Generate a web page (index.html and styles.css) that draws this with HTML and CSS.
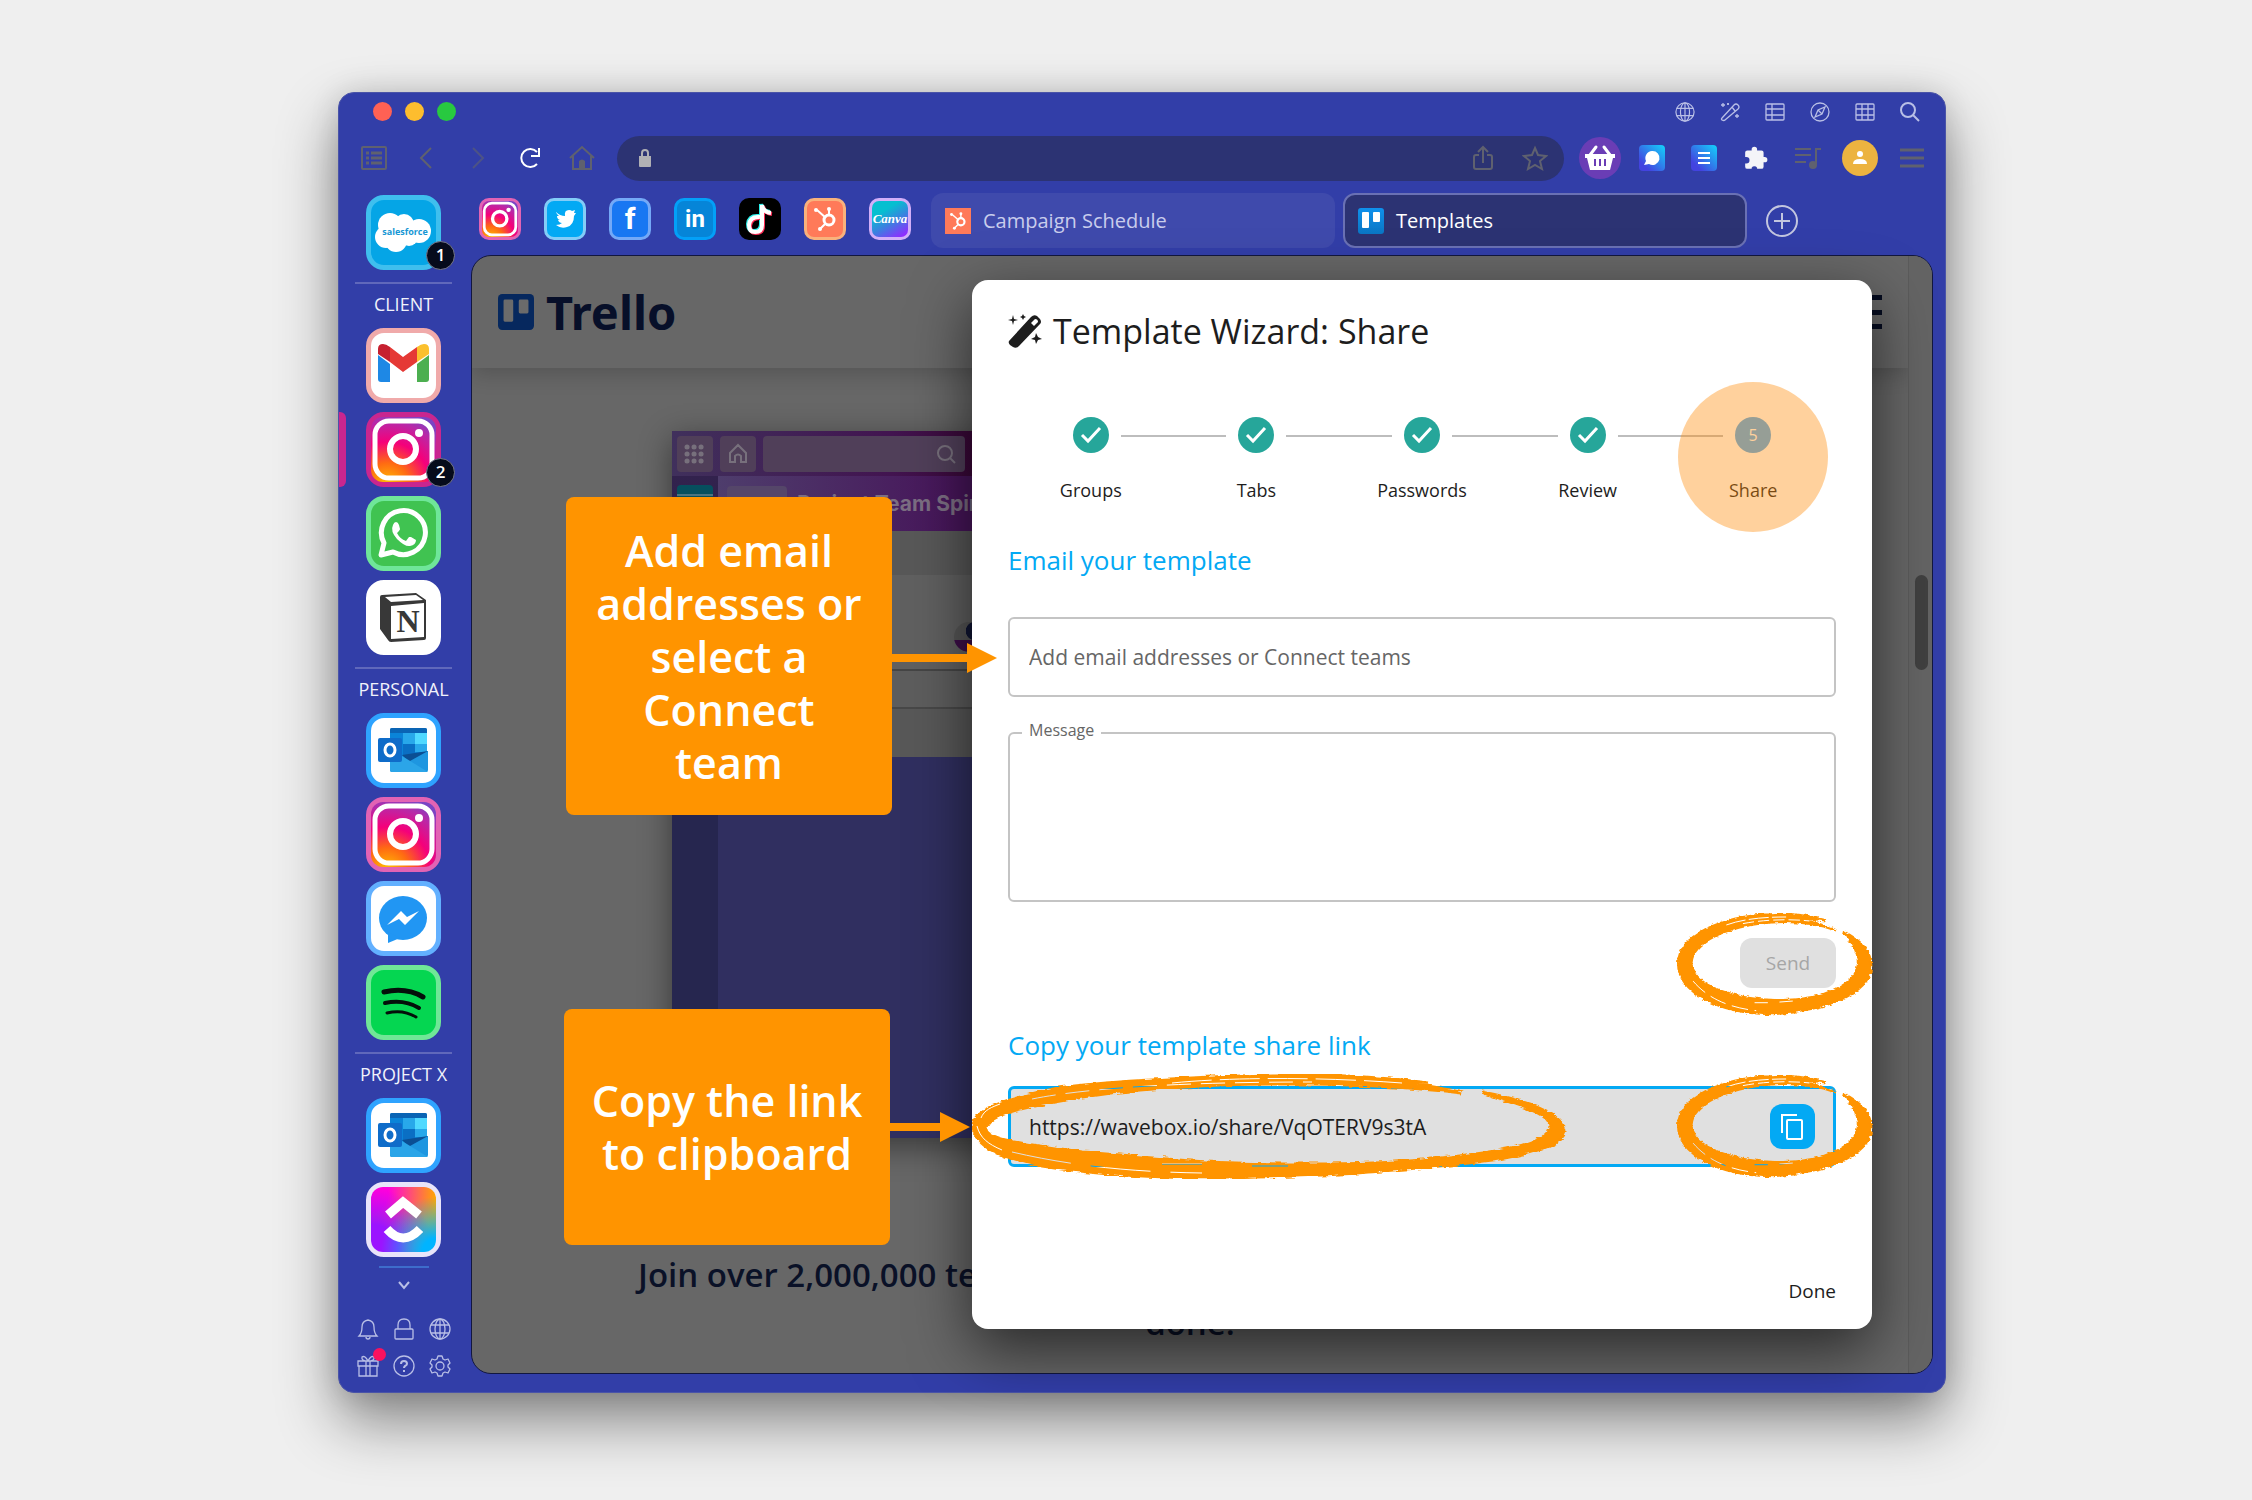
FILE: index.html
```html
<!DOCTYPE html>
<html lang="en">
<head>
    <meta charset="UTF-8">
    <meta name="viewport" content="width=device-width, initial-scale=1.0">
    <title>Template Wizard: Share</title>
    <link rel="stylesheet" href="styles.css">
</head>
<body>
    <!-- shared icon shapes -->
    <svg class="defs" aria-hidden="true">
        <defs>
            <radialGradient id="insta-fill" cx="0.25" cy="1.05" r="1.15">
                <stop offset="0" stop-color="#ffc400"/>
                <stop offset="0.3" stop-color="#ff6a13"/>
                <stop offset="0.58" stop-color="#f5007a"/>
                <stop offset="0.85" stop-color="#b829a8"/>
                <stop offset="1" stop-color="#7a45c4"/>
            </radialGradient>
            <linearGradient id="app-fill" x1="0" y1="1" x2="1" y2="0">
                <stop offset="0.2" stop-color="#4343e0"/>
                <stop offset="1" stop-color="#12d4fb"/>
            </linearGradient>
            <linearGradient id="canva-fill" x1="0.2" y1="0" x2="0.8" y2="1">
                <stop offset="0.25" stop-color="#06bfd0"/>
                <stop offset="0.6" stop-color="#3c7fe0"/>
                <stop offset="1" stop-color="#8f2cff"/>
            </linearGradient>
            <linearGradient id="trello-fill" x1="0" y1="0" x2="0" y2="1">
                <stop offset="0" stop-color="#0f91ec"/>
                <stop offset="1" stop-color="#0a76c4"/>
            </linearGradient>
            <symbol id="instagram" viewBox="0 0 65 65">
                <rect width="65" height="65" fill="url(#insta-fill)"/>
                <rect x="4" y="4" width="57" height="57" rx="14" fill="none" stroke="#fff" stroke-width="5"/>
                <circle cx="32" cy="32" r="13" fill="none" stroke="#fff" stroke-width="6"/>
                <circle cx="48" cy="16" r="4" fill="#fff"/>
            </symbol>
            <symbol id="outlook" viewBox="0 0 65 65">
                <rect x="19" y="10" width="37" height="44" rx="2" fill="#0a84d8"/>
                <path d="M19 15v-3q0-2 2-2h33q2 0 2 2v3z" fill="#0a64b4"/>
                <path d="M44 15h12v11H44z" fill="#50d9ff"/>
                <path d="M32 15h12v11H32zM44 26h12v8H44z" fill="#28a8ea"/>
                <path d="M32 26h12v12H32z" fill="#0a6fc4"/>
                <path d="M31 37l26-4v2L39 45z" fill="#0b4f94"/>
                <path d="M57 33v19q0 2-2 2H21l18-11z" fill="#1e96e0"/>
                <path d="M31 38l26 16H21q-2 0-2-2V40z" fill="#2ba5e8"/>
                <rect x="7" y="20" width="24" height="24" rx="2" fill="#0f6cc9"/>
                <ellipse cx="19" cy="32" rx="5" ry="6" fill="none" stroke="#fff" stroke-width="3"/>
            </symbol>
            <symbol id="hubspot" viewBox="0 0 36 36">
                <g fill="none" stroke="#fff" stroke-width="2">
                    <path d="M10 9l9 8M22 14V8M18 23l-5 5"/>
                    <circle cx="22" cy="19" r="5" stroke-width="3"/>
                </g>
                <g fill="#fff"><circle cx="9" cy="9" r="2"/><circle cx="22" cy="8" r="2"/><circle cx="13" cy="28" r="2"/></g>
            </symbol>
            <symbol id="trello" viewBox="0 0 26 26">
                <rect width="26" height="26" rx="3"/>
                <path class="trello-cols" d="M5 4h5q1 0 1 1v14q0 1-1 1H5q-1 0-1-1V5q0-1 1-1zM16 4h5q1 0 1 1v8q0 1-1 1h-5q-1 0-1-1V5q0-1 1-1z"/>
            </symbol>
            <symbol id="globe" viewBox="0 0 22 22">
                <circle cx="11" cy="11" r="10"/><ellipse cx="11" cy="11" rx="5" ry="10"/><path d="M2 7h18M2 15h18M11 1v20"/>
            </symbol>
            <!-- brush stroke rings, open at the top right -->
            <filter id="rough" x="-5%" y="-10%" width="110%" height="120%">
                <feTurbulence type="fractalNoise" baseFrequency="0.06 0.12" numOctaves="3" seed="4" result="noise"/>
                <feDisplacementMap in="SourceGraphic" in2="noise" scale="12" xChannelSelector="R" yChannelSelector="G"/>
            </filter>
            <filter id="rough-wide" x="-5%" y="-10%" width="110%" height="120%">
                <feTurbulence type="fractalNoise" baseFrequency="0.08 0.4" numOctaves="3" seed="7" result="noise"/>
                <feDisplacementMap in="SourceGraphic" in2="noise" scale="5" xChannelSelector="R" yChannelSelector="G"/>
            </filter>
            <mask id="streaks" maskUnits="userSpaceOnUse" x="-20" y="-20" width="630" height="350">
                <rect x="-20" y="-20" width="630" height="350" fill="#fff"/>
                <g fill="none" stroke="#000" stroke-width="3">
                    <path stroke-dasharray="60 10" d="M150 36C200 18 260 12 330 12"/>
                    <path stroke-dasharray="34 12" d="M200 32C250 22 330 16 400 24"/>
                    <path stroke-dasharray="50 20" d="M50 205C100 264 170 286 240 294"/>
                    <path d="M235 270h40M310 268l40-3"/>
                </g>
            </mask>
            <mask id="streaks-wide" maskUnits="userSpaceOnUse" x="-10" y="-10" width="620" height="130">
                <rect x="-10" y="-10" width="620" height="130" fill="#fff"/>
                <g fill="none" stroke="#000">
                    <path stroke-dasharray="40 8" d="M200 9C260 3 350 3 430 9"/>
                    <path stroke-dasharray="24 10" d="M60 25C120 13 220 8 340 8"/>
                    <path stroke-dasharray="60 20" d="M40 78C100 92 160 98 230 99"/>
                    <path d="M190 90h40M280 92h36"/>
                    <path d="M5 52C8 64 16 70 30 76M9 44C12 36 20 33 28 30"/>
                </g>
            </mask>
            <symbol id="ring" viewBox="0 0 590 310">
                <g mask="url(#streaks)">
                    <g filter="url(#rough)" fill="#ff9400" stroke="#ff9400" stroke-width="7">
                        <path d="M450 22C390 4 330 0 280 4 130 10 8 70 5 150c-2 90 130 153 269 153C430 299 582 250 586 160c0-45-34-80-84-104 28 34 46 60 44 96C544 215 440 264 310 262 180 264 46 220 45 150 48 90 140 40 290 28c60-4 130 4 190 24-40-20-80-28-120-32 40-4 64-2 90 2z"/>
                        <path stroke="none" d="M60 220C110 280 190 306 290 308l70-6-200-26z"/>
                    </g>
                </g>
            </symbol>
            <symbol id="ring-long" viewBox="0 0 595 105">
                <g mask="url(#streaks-wide)">
                    <path filter="url(#rough-wide)" fill="#ff9400" stroke="#ff9400" stroke-width="3" d="M457 9C400 2 350 0 300 1 200 4 130 8 86 14 40 24 2 34 1 52c2 22 30 32 69 40 50 8 110 12 183 12 60-2 100-2 143-6 70-6 190-12 197-40 0-18-40-32-83-40 30 12 68 20 68 34 0 18-50 26-100 31-40 5-80 7-123 7-50 0-80 0-122-2-60-4-90-8-123-10-50-7-96-12-96-23 0-16 50-24 96-32C160 15 190 14 212 13c50-4 180-6 278 6-30-8-60-10-90-12 20-2 40 0 57 2z"/>
                </g>
            </symbol>
        </defs>
    </svg>

    <div class="window">
        <header class="titlebar">
            <div class="lights"><span class="light red"></span><span class="light yellow"></span><span class="light green"></span></div>
            <div class="tools">
                <button aria-label="Languages"><svg class="line" width="20" height="20"><use href="#globe"/></svg></button>
                <button aria-label="Wizard"><svg class="line" viewBox="0 0 20 20"><path d="M2 16L14 3q2-2 4 0t0 4L5 18q-1 1-3 0-1-1 0-2zM12 5l3 4M3 1v4M1 3h4M8 1v2M7 2h2M17 12v4M15 14h4"/></svg></button>
                <button aria-label="List"><svg class="line" viewBox="0 0 20 20"><rect x="1" y="2" width="18" height="16" rx="1"/><path d="M1 7h18M1 13h18M7 2v16"/></svg></button>
                <button aria-label="Explore"><svg class="line" viewBox="0 0 20 20"><circle cx="10" cy="10" r="9"/><path d="M15 5l-3 7-7 3 3-7zM8 8l4 4"/></svg></button>
                <button aria-label="Grid"><svg class="line" viewBox="0 0 20 20"><rect x="1" y="2" width="18" height="16" rx="1"/><path d="M1 7h18M1 13h18M7 2v16M13 2v16"/></svg></button>
                <button aria-label="Search"><svg class="line thick" viewBox="0 0 20 20"><circle cx="8" cy="8" r="7"/><path d="M13 13l6 6"/></svg></button>
            </div>
        </header>

        <div class="toolbar">
            <nav class="nav-buttons">
                <button aria-label="Sidebar"><svg class="dim" viewBox="0 0 26 26"><rect x="1" y="2" width="24" height="22" rx="1"/><path d="M10 8h11M10 13h11M10 18h11M5 8h3M5 13h3M5 18h3" stroke-width="3"/></svg></button>
                <button aria-label="Back"><svg class="dim" viewBox="0 0 26 26"><path d="M18 3L8 13l10 10"/></svg></button>
                <button aria-label="Forward"><svg class="dim faint" viewBox="0 0 26 26"><path d="M8 3l10 10L8 23"/></svg></button>
                <button aria-label="Reload"><svg class="bright" viewBox="0 0 26 26"><path d="M20 19a9 9 0 1 1 0-12M22 3v8h-8"/></svg></button>
                <button aria-label="Home"><svg class="dim" viewBox="0 0 26 26"><path d="M1 13L13 2l12 11M4 11v13h18V11"/><path d="M10 24v-8q3-3 6 0v8z" fill="#5f616f" stroke="none"/></svg></button>
            </nav>
            <div class="address">
                <svg class="lock" viewBox="0 0 18 20"><path d="M3 8h12v10q0 1-1 1H4q-1 0-1-1z" fill="#b0b0b4"/><path d="M6 8V5q0-3 3-3t3 3v3" fill="none" stroke="#b0b0b4" stroke-width="2"/></svg>
                <input type="text" aria-label="Address">
                <button aria-label="Share page"><svg class="dim" viewBox="0 0 26 26"><path d="M9 10H6q-2 0-2 2v10q0 2 2 2h14q2 0 2-2V12q0-2-2-2h-3M13 18V3M8 7l5-5 5 5"/></svg></button>
                <button aria-label="Bookmark"><svg class="dim" viewBox="0 0 26 26"><path d="M13 3l3 7 8 1-6 5 2 8-7-4-7 4 2-8-6-5 8-1z"/></svg></button>
            </div>
            <div class="extensions">
                <button aria-label="Shopping"><svg width="42" height="42" viewBox="0 0 42 42"><circle cx="21" cy="21" r="21" fill="#6a3db5"/><path d="M6 17h30v4h-2l-3 12H11L8 21H6z" fill="#fff"/><path d="M11 18l6-8M31 18l-6-8" stroke="#fff" stroke-width="3" stroke-linecap="round"/><path d="M16 22v7M21 22v7M26 22v7" stroke="#6a3db5" stroke-width="2"/></svg></button>
                <button aria-label="Chat"><svg width="26" height="26" viewBox="0 0 26 26"><rect width="26" height="26" rx="4" fill="url(#app-fill)"/><path d="M13 6a7 7 0 1 1-3 13l-5 1 2-4a7 7 0 0 1 6-10z" fill="#fff"/></svg></button>
                <button aria-label="Notes"><svg width="26" height="26" viewBox="0 0 26 26"><rect width="26" height="26" rx="4" fill="url(#app-fill)"/><path d="M7 8h12M7 13h12M7 18h12" stroke="#fff" stroke-width="2"/></svg></button>
                <button aria-label="Extensions"><svg width="26" height="26" viewBox="0 0 24 24"><path d="M20 11h-1V7a2 2 0 0 0-2-2h-4V4a2 2 0 0 0-5 0v1H4a2 2 0 0 0-2 2v4h1a3 3 0 0 1 0 6H2v3a2 2 0 0 0 2 2h4v-1a3 3 0 0 1 5 0v1h4a2 2 0 0 0 2-2v-4h1a2 2 0 0 0 0-5z" fill="#f4f4f8"/></svg></button>
                <button aria-label="Playlist"><svg class="dim" width="26" height="26" viewBox="0 0 26 26"><path d="M0 4h16M0 10h16M0 17h11M26 4h-5v15"/><circle cx="18" cy="20" r="4" fill="#5f616f" stroke="none"/></svg></button>
                <button aria-label="Account"><svg width="36" height="36" viewBox="0 0 36 36"><circle cx="18" cy="18" r="18" fill="#ecb340"/><circle cx="18" cy="14" r="3" fill="#fff"/><path d="M11 24q0-5 7-5t7 5z" fill="#fff"/></svg></button>
                <button aria-label="Menu"><svg class="dim" width="24" height="26" viewBox="0 0 24 26"><path d="M0 5h24M0 13h24M0 21h24" stroke-width="3"/></svg></button>
            </div>
        </div>

        <div class="workspace">
            <aside class="sidebar">
                <a href="#" class="tile salesforce" aria-label="Salesforce">
                    <svg viewBox="0 0 65 65"><g fill="#fff"><circle cx="19" cy="25" r="12"/><circle cx="33" cy="24" r="10"/><circle cx="48" cy="31" r="12"/><circle cx="15" cy="37" r="11"/><circle cx="25" cy="41" r="11"/><circle cx="38" cy="37" r="9"/></g><text x="34" y="35" class="sf-text">salesforce</text></svg>
                    <span class="badge">1</span>
                </a>
                <section class="group">
                    <h2>CLIENT</h2>
                    <a href="#" class="tile gmail" aria-label="Gmail">
                        <svg viewBox="0 0 65 65"><path d="M7 22l12 9v18h-9q-3 0-3-3z" fill="#1e88e5"/><path d="M58 22l-12 9v18h9q3 0 3-3z" fill="#4caf50"/><path d="M19 14l13 10 14-10v15L32 39 19 29z" fill="#e53935"/><path d="M7 22v-6q0-5 5-5 3 0 7 3v15L7 21z" fill="#c62030"/><path d="M58 22v-6q0-5-5-5-3 0-7 3v15l12-8z" fill="#fbc02d"/></svg>
                    </a>
                    <a href="#" class="tile insta active" aria-label="Instagram, client"><svg><use href="#instagram"/></svg><span class="badge">2</span></a>
                    <a href="#" class="tile whatsapp" aria-label="WhatsApp">
                        <svg viewBox="0 0 65 65"><path d="M10 54l3-12a22 22 0 1 1 9 9z" fill="none" stroke="#fff" stroke-width="5" stroke-linejoin="round"/><path d="M25 21q2 0 3 3l1 4q0 1-3 4 3 6 9 8l3-4 2 0 5 3q0 5-6 6-5 1-13-7-7-8-4-14 1-3 3-3z" fill="#fff"/></svg>
                    </a>
                    <a href="#" class="tile notion" aria-label="Notion">
                        <svg viewBox="0 0 65 65"><path d="M9 12q0-2 2-2l34-2 10 7v38q0 2-2 2l-33 2q-2 0-3-2l-8-11z" fill="#383838"/><path d="M14 12l31-2 7 5-32 2z" fill="#fff"/><path d="M20 21l33-3v34l-33 2z" fill="#fff"/><text x="37" y="47" class="notion-n">N</text></svg>
                    </a>
                </section>
                <section class="group">
                    <h2>PERSONAL</h2>
                    <a href="#" class="tile outlook" aria-label="Outlook"><svg><use href="#outlook"/></svg></a>
                    <a href="#" class="tile insta" aria-label="Instagram, personal"><svg><use href="#instagram"/></svg></a>
                    <a href="#" class="tile messenger" aria-label="Messenger">
                        <svg viewBox="0 0 65 65"><ellipse cx="32" cy="32" rx="24" ry="22" fill="#2196f3"/><path d="M17 46v11l12-5z" fill="#2196f3"/><path d="M16 39l14-14 6 6 12-6-14 14-6-6z" fill="#fff"/></svg>
                    </a>
                    <a href="#" class="tile spotify" aria-label="Spotify">
                        <svg viewBox="0 0 65 65"><g fill="none" stroke="#04100a" stroke-linecap="round"><path d="M13 22q22-5 39 5" stroke-width="5"/><path d="M14 33q19-4 34 5" stroke-width="4"/><path d="M16 43q16-4 29 4" stroke-width="3"/></g></svg>
                    </a>
                </section>
                <section class="group">
                    <h2>PROJECT X</h2>
                    <a href="#" class="tile outlook" aria-label="Outlook, project"><svg><use href="#outlook"/></svg></a>
                    <a href="#" class="tile clickup" aria-label="ClickUp">
                        <svg viewBox="0 0 65 65"><g fill="none" stroke="#fff" stroke-width="9"><path d="M17 28l15-13 16 13"/><path d="M16 42q16 18 33 0"/></g></svg>
                    </a>
                </section>
                <button class="more" aria-label="More groups"><svg class="line thick" viewBox="0 0 20 20"><path d="M5 7l5 6 5-6"/></svg></button>
                <div class="side-tools">
                    <button aria-label="Notifications"><svg class="line" viewBox="0 0 22 22"><path d="M2 18q3-3 3-9 0-6 6-7 6 1 6 7 0 6 3 9zM9 19q0 2 2 2t2-2"/></svg></button>
                    <button aria-label="Lock"><svg class="line" viewBox="0 0 22 22"><rect x="2" y="11" width="18" height="10" rx="1"/><path d="M5 11V7q0-6 6-6t6 6v4"/></svg></button>
                    <button aria-label="Network"><svg class="line"><use href="#globe"/></svg></button>
                    <button class="gift" aria-label="What's new"><svg class="line" viewBox="0 0 22 22"><path d="M1 6h20v5H1zM2 11h18v10H2zM9 6v15M13 6v15M11 6Q4 6 5 2q3-2 6 4 3-6 6-4 1 4-6 4"/></svg></button>
                    <button aria-label="Help"><svg class="line" viewBox="0 0 22 22"><circle cx="11" cy="11" r="10"/><path d="M8 9q0-3 3-3t3 3q0 1-2 2-1 1-1 2M11 15v2" stroke-width="2"/></svg></button>
                    <button aria-label="Settings"><svg class="line" viewBox="0 0 22 22"><circle cx="11" cy="11" r="4"/><path d="M9 1h4l1 3 2 1 3-1 2 4-2 2v2l2 2-2 4-3-1-2 1-1 3H9l-1-3-2-1-3 1-2-4 2-2v-2L1 8l2-4 3 1 2-1z" stroke-linejoin="round"/></svg></button>
                </div>
            </aside>

            <div class="main">
                <nav class="tabs">
                    <div class="pinned">
                        <a href="#" class="pin insta" aria-label="Instagram tab"><svg><use href="#instagram"/></svg></a>
                        <a href="#" class="pin twitter" aria-label="Twitter"><svg viewBox="0 0 36 36"><path d="M9 11q4 4 9 4-1-6 4-6 2 0 3 1l3-1-1 3 2 0-2 3q0 9-7 11-6 2-11-2 4 0 6-2-3 0-4-3h2q-3-1-3-4l2 0q-3-3-3-4z" fill="#fff"/></svg></a>
                        <a href="#" class="pin facebook" aria-label="Facebook"><svg viewBox="0 0 36 36"><text x="18" y="28">f</text></svg></a>
                        <a href="#" class="pin linkedin" aria-label="LinkedIn"><svg viewBox="0 0 36 36"><text x="18" y="26">in</text></svg></a>
                        <a href="#" class="pin tiktok" aria-label="TikTok"><svg viewBox="0 0 36 36"><g fill="none" stroke-width="4"><path d="M17 15q-10-1-11 8 0 7 6 7 7 0 7-7V3q1 7 9 8" stroke="#2af0ea"/><path d="M19 17q-10-1-11 8 0 7 6 7 7 0 7-7V5q1 7 9 8" stroke="#fe2c55"/><path d="M18 16q-10-1-11 8 0 7 6 7 7 0 7-7V4q1 7 9 8" stroke="#fff"/></g></svg></a>
                        <a href="#" class="pin hub" aria-label="HubSpot"><svg><use href="#hubspot"/></svg></a>
                        <a href="#" class="pin canva" aria-label="Canva"><svg viewBox="0 0 36 36"><rect width="36" height="36" fill="url(#canva-fill)"/><text x="18" y="22">Canva</text></svg></a>
                    </div>
                    <a href="#" class="tab"><svg class="favicon hub-fav"><use href="#hubspot"/></svg>Campaign Schedule</a>
                    <a href="#" class="tab current"><svg class="favicon trello-fav"><use href="#trello"/></svg>Templates</a>
                    <button class="add-tab" aria-label="New tab"><svg viewBox="0 0 32 32"><circle cx="16" cy="16" r="15"/><path d="M16 8v16M8 16h16"/></svg></button>
                </nav>

                <div class="viewport">
                    <div class="page">
                        <div class="site">
                            <header class="site-header">
                                <svg class="site-logo"><use href="#trello"/></svg>
                                <span class="site-name">Trello</span>
                                <span class="burger"></span>
                            </header>
                            <div class="board">
                                <div class="board-bar">
                                    <span class="board-btn"><svg viewBox="0 0 26 26"><path d="M5 6h.1M12 6h.1M19 6h.1M5 13h.1M12 13h.1M19 13h.1M5 20h.1M12 20h.1M19 20h.1" stroke-width="5" stroke-linecap="round"/></svg></span>
                                    <span class="board-btn"><svg viewBox="0 0 26 26"><path d="M5 21V12l8-8 8 8v9h-5v-6q-3-3-6 0v6z"/></svg></span>
                                    <span class="board-search"><svg viewBox="0 0 26 26"><circle cx="12" cy="12" r="7"/><path d="M17 17l5 5"/></svg></span>
                                </div>
                                <div class="board-body">
                                    <div class="board-side"><span class="board-chip"></span></div>
                                    <div class="board-main">
                                        <div class="board-title"><span class="board-tag"></span>Project Team Spirit</div>
                                        <div class="board-filter"></div>
                                        <div class="board-card"><span class="avatar"></span></div>
                                        <div class="board-row"></div>
                                        <div class="board-foot"></div>
                                    </div>
                                </div>
                            </div>
                            <p class="tagline">Join over 2,000,000 teams worldwide that are using Trello to get more done.</p>
                        </div>
                        <div class="scroll"><span class="thumb"></span></div>
                    </div>

                    <form class="modal" onsubmit="return false">
                        <h1><svg viewBox="0 0 34 34"><path d="M1 27L23 3q3-3 6-1l3 3q2 3 0 5L11 32q-3 3-6 1l-3-2q-2-2-1-4z"/><path d="M23 9l4-4q3 0 3 3l-4 4z" fill="#fff"/><path d="M5 1l1 4 4 1-4 1-1 4-1-4-4-1 4-1zM15 0l1 2 2 1-2 1-1 2-1-2-2-1 2-1zM28 19l2 4 4 2-4 1-2 4-1-4-4-1 4-2z"/></svg>Template Wizard: Share</h1>
                        <ol class="steps">
                            <li><span class="dot"><svg viewBox="0 0 36 36"><path d="M9 18l6 6 12-13"/></svg></span>Groups</li>
                            <li><span class="dot"><svg viewBox="0 0 36 36"><path d="M9 18l6 6 12-13"/></svg></span>Tabs</li>
                            <li><span class="dot"><svg viewBox="0 0 36 36"><path d="M9 18l6 6 12-13"/></svg></span>Passwords</li>
                            <li><span class="dot"><svg viewBox="0 0 36 36"><path d="M9 18l6 6 12-13"/></svg></span>Review</li>
                            <li class="now"><span class="dot">5</span>Share<span class="spot"></span></li>
                        </ol>
                        <h3>Email your template</h3>
                        <div class="field emails">
                            <input type="text" aria-label="Email addresses" placeholder="Add email addresses or Connect teams">
                            <div class="callout callout-add">Add email addresses or select a Connect team</div>
                        </div>
                        <div class="field message">
                            <label for="message">Message</label>
                            <textarea id="message"></textarea>
                        </div>
                        <div class="send-row">
                            <button class="send" disabled>Send</button>
                            <svg class="ring ring-small"><use href="#ring"/></svg>
                        </div>
                        <h3>Copy your template share link</h3>
                        <div class="field link">
                            <input type="text" aria-label="Share link" value="https://wavebox.io/share/VqOTERV9s3tA" readonly>
                            <button class="copy" aria-label="Copy link"><svg viewBox="0 0 45 45"><path d="M12 29V11h15"/><rect x="17" y="16" width="15" height="19" rx="1"/></svg></button>
                            <svg class="ring ring-wide"><use href="#ring-long"/></svg>
                            <svg class="ring ring-small"><use href="#ring"/></svg>
                            <div class="callout callout-copy">Copy the link to clipboard</div>
                        </div>
                        <button class="done">Done</button>
                    </form>
                </div>
            </div>
        </div>
    </div>
</body>
</html>
```
FILE: styles.css
```css
* {
    box-sizing: border-box;
}
body {
    display: flex;
    min-height: 100vh;
    margin: 0;
    padding: 92px 306px 107px 338px;
    background: #efefef;
    font-family: "Open Sans", "Noto Sans", sans-serif;
    color: #1d1d1d;
}
button, input, textarea {
    font-family: inherit;
    color: inherit;
}
button {
    display: flex;
    align-items: center;
    justify-content: center;
    padding: 0;
    border: none;
    background: none;
    cursor: pointer;
}
a {
    color: inherit;
    text-decoration: none;
}
svg {
    display: block;
}
.defs {
    position: absolute;
    width: 0;
    height: 0;
}

/* window */
.window {
    flex: 1;
    display: flex;
    flex-direction: column;
    border-radius: 16px;
    background: #323ea8;
    border: 1px solid #4a54a8;
    box-shadow: 0 28px 60px rgba(0, 0, 0, 0.45), 0 0 30px rgba(0, 0, 0, 0.12);
}
.titlebar {
    display: flex;
    align-items: center;
    justify-content: space-between;
    height: 37px;
    padding: 0 25px 0 34px;
}
.lights {
    display: flex;
    gap: 13px;
}
.light {
    width: 19px;
    height: 19px;
    border-radius: 50%;
}
.red { background: #ff6154; }
.yellow { background: #fdbd2e; }
.green { background: #28c940; }
.tools {
    display: flex;
    gap: 25px;
}
.tools svg {
    width: 20px;
    height: 20px;
}
.line {
    fill: none;
    stroke: #b9bfe6;
    stroke-width: 1.3;
}
.thick {
    stroke-width: 2;
}
.dim {
    fill: none;
    stroke: #5f616f;
    stroke-width: 2;
}
.faint {
    opacity: 0.6;
}
.bright {
    fill: none;
    stroke: #fff;
    stroke-width: 2;
}

/* toolbar */
.toolbar {
    display: flex;
    align-items: center;
    height: 56px;
    padding: 0 12px 0 22px;
}
.nav-buttons {
    display: flex;
    gap: 26px;
    margin-right: 22px;
}
.nav-buttons svg, .address button svg {
    width: 26px;
    height: 26px;
}
.address {
    flex: 1;
    display: flex;
    align-items: center;
    gap: 26px;
    height: 45px;
    margin-right: 15px;
    padding: 0 16px 0 19px;
    border-radius: 23px;
    background: #2c3373;
}
.address input {
    flex: 1;
    border: none;
    background: none;
    font-size: 20px;
    color: #fff;
}
.lock {
    width: 18px;
    height: 20px;
}
.extensions {
    display: flex;
    gap: 10px;
}
.extensions button {
    width: 42px;
    height: 42px;
}

/* sidebar */
.workspace {
    flex: 1;
    display: flex;
}
.sidebar {
    display: flex;
    flex-direction: column;
    align-items: center;
    width: 132px;
    padding: 9px 3px 15px 0;
}
.tile {
    position: relative;
    display: block;
    width: 75px;
    height: 75px;
    border: 5px solid #fff;
    border-radius: 18px;
    background: #fff;
}
.tile svg {
    width: 65px;
    height: 65px;
    border-radius: 12px;
}
.tile + .tile {
    margin-top: 9px;
}
.badge {
    position: absolute;
    top: 41px;
    right: -19px;
    width: 29px;
    height: 29px;
    border: 1px solid #77798c;
    border-radius: 50%;
    background: #060b1c;
    color: #fff;
    font-size: 17px;
    font-weight: 600;
    line-height: 26px;
    text-align: center;
}
.salesforce { background: #05a5e6; border-color: #3fbfee; }
.gmail { border-color: #f0aaaa; }
.insta { background: #e263b4; border-color: #e263b4; }
.active { background: #c9268f; border-color: #c9268f; }
.whatsapp { background: #40c351; border-color: #6fe699; }
.outlook { border-color: #2ea3ff; }
.messenger { border-color: #62b0ff; }
.spotify { background: #05d651; border-color: #70e797; }
.clickup { border-color: #e8e4fa; }
.clickup svg {
    background: radial-gradient(circle at 100% 100%, #00b4ff 15%, transparent 60%), radial-gradient(circle at 0 100%, #9b14ff 30%, transparent 70%), radial-gradient(circle at 0 10%, #ff00dc 20%, transparent 75%), #ffa800;
}
.active::before {
    content: "";
    position: absolute;
    left: -32px;
    top: -5px;
    width: 7px;
    height: 75px;
    border-radius: 0 6px 6px 0;
    background: #c9268f;
}
.sf-text {
    font-size: 9px;
    font-weight: 700;
    text-anchor: middle;
    fill: #1797d4;
}
.notion-n {
    font-family: "Liberation Serif", serif;
    font-size: 32px;
    font-weight: 700;
    text-anchor: middle;
    fill: #383838;
}
.group {
    display: flex;
    flex-direction: column;
    align-items: center;
    width: 97px;
    margin-top: 12px;
    border-top: 2px solid #6068bb;
}
.group h2 {
    margin: 0;
    height: 44px;
    color: #f1f2fb;
    font-size: 18px;
    font-weight: 400;
    line-height: 40px;
    white-space: nowrap;
}
.more {
    width: 50px;
    height: 35px;
    margin-top: 9px;
    border-top: 2px solid #3d6ccb;
}
.more svg {
    width: 20px;
    height: 20px;
}
.side-tools {
    display: grid;
    grid-template-columns: repeat(3, 22px);
    gap: 15px 14px;
    margin-top: auto;
}
.side-tools svg {
    width: 22px;
    height: 22px;
}
.gift {
    position: relative;
}
.gift::after {
    content: "";
    position: absolute;
    top: -7px;
    right: -7px;
    width: 13px;
    height: 13px;
    border-radius: 50%;
    background: #f8125f;
}

/* tabs */
.main {
    flex: 1;
    display: flex;
    flex-direction: column;
    min-width: 0;
    padding: 0 12px 18px 0;
}
.tabs {
    display: flex;
    align-items: center;
    gap: 8px;
    height: 69px;
    padding-left: 8px;
}
.pinned {
    display: flex;
    gap: 23px;
    margin-right: 12px;
    padding-bottom: 4px;
}
.pin {
    width: 42px;
    height: 42px;
    border: 3px solid;
    border-radius: 10px;
}
.pin svg {
    width: 36px;
    height: 36px;
    border-radius: 7px;
}
.pin text {
    fill: #fff;
    text-anchor: middle;
    font-family: Roboto, sans-serif;
    font-size: 24px;
    font-weight: 700;
}
.pin.insta { border-color: #e263b4; }
.twitter { background: #03a9f4; border-color: #83cdf8; }
.facebook { background: #1877f2; border-color: #74a9f7; }
.pin.facebook text { font-size: 30px; }
.linkedin { background: #0685d8; border-color: #03a0f8; }
.tiktok { background: #000; border-color: #000; }
.hub { background: #ff7a59; border-color: #f9b27c; }
.canva { background: #d2aef8; border-color: #d2aef8; }
.pin.canva text {
    font-family: "Liberation Serif", serif;
    font-size: 13px;
    font-style: italic;
}
.tab {
    display: flex;
    flex: 0 1 404px;
    align-items: center;
    gap: 12px;
    height: 55px;
    padding: 0 13px;
    border: 1px solid transparent;
    border-radius: 12px;
    background: #3f4aac;
    color: #c9cdec;
    font-size: 20px;
    white-space: nowrap;
}
.tab.current {
    border: 2px solid #6a71b4;
    background: #2c3373;
    color: #fff;
}
.favicon {
    width: 26px;
    height: 26px;
}
.hub-fav {
    background: #ff7a59;
}
.trello-fav {
    fill: url(#trello-fill);
}
.trello-cols {
    fill: var(--cols, #fff);
}
.add-tab {
    margin-left: 11px;
}
.add-tab svg {
    width: 32px;
    height: 32px;
    fill: none;
    stroke: #c3c6df;
    stroke-width: 2;
}

/* page under the modal */
.viewport {
    position: relative;
    flex: 1;
    display: flex;
}
.page {
    flex: 1;
    display: flex;
    overflow: hidden;
    border: 1px solid #12173f;
    border-radius: 20px;
    background: #676767;
}
.site {
    flex: 1;
    min-width: 0;
}
.site-header {
    display: flex;
    align-items: center;
    height: 112px;
    padding: 0 26px 0 26px;
    box-shadow: 0 6px 20px rgba(0, 0, 0, 0.18);
}
.site-logo {
    --cols: #6b6b6b;
    width: 36px;
    height: 36px;
    fill: #06285e;
}
.site-name {
    margin-left: 12px;
    color: #070f29;
    font-family: "Noto Sans", sans-serif;
    font-size: 47px;
    font-weight: 700;
    line-height: 56px;
}
.burger {
    width: 40px;
    height: 34px;
    margin-left: auto;
    border-top: 5px solid #050c20;
    border-bottom: 5px solid #050c20;
    background: linear-gradient(#050c20, #050c20) center / 100% 5px no-repeat;
}
.board {
    display: flex;
    flex-direction: column;
    height: 707px;
    margin: 63px 200px 0;
    background: #302f60;
    box-shadow: 0 8px 30px rgba(0, 0, 0, 0.45);
}
.board-bar {
    display: flex;
    gap: 7px;
    height: 45px;
    padding: 5px;
    background: linear-gradient(90deg, #40305c, #421450 220px, #3a0838 300px);
}
.board-bar span {
    display: flex;
    align-items: center;
    height: 36px;
    border-radius: 4px;
    background: #503f59;
}
.board-bar svg {
    width: 26px;
    height: 26px;
    fill: none;
    stroke: #77707c;
    stroke-width: 2;
}
.board-btn {
    justify-content: center;
    width: 36px;
}
.board-search {
    justify-content: flex-end;
    width: 202px;
    padding-right: 6px;
}
.board-body {
    flex: 1;
    display: flex;
}
.board-side {
    width: 46px;
    padding: 9px 5px;
    background: linear-gradient(#32224d, #26264f 120px);
}
.board-chip {
    display: block;
    height: 36px;
    border-radius: 4px;
    background: linear-gradient(#064f5e 9px, #4a7480 9px, #4a7480 11px, #064f5e 11px);
}
.board-main {
    flex: 1;
    display: flex;
    flex-direction: column;
}
.board-title {
    display: flex;
    align-items: center;
    gap: 10px;
    height: 55px;
    padding: 0 9px;
    background: linear-gradient(90deg, #4e3d6c, #47155a 240px);
    color: #7b6e82;
    font-family: Inter, sans-serif;
    font-size: 21px;
    font-weight: 700;
    white-space: nowrap;
}
.board-tag {
    width: 60px;
    height: 36px;
    border-radius: 4px;
    background: #554669;
}
.board-filter {
    height: 44px;
    background: #585858;
}
.board-card {
    display: flex;
    align-items: center;
    height: 96px;
    padding: 30px 0 0 236px;
    border-bottom: 2px solid #454545;
    background: #606060;
}
.avatar {
    width: 30px;
    height: 30px;
    border-radius: 50%;
    background: radial-gradient(circle at 70% 30%, #101533 30%, transparent 32%), linear-gradient(#555 60%, #3c0d48 60%);
}
.board-row {
    height: 38px;
    border-bottom: 2px solid #484848;
    background: #5d5d5d;
}
.board-foot {
    height: 48px;
    background: #585858;
}
.tagline {
    max-width: 1150px;
    margin: 113px auto 0;
    color: #0a1127;
    font-size: 33px;
    font-weight: 600;
    line-height: 48px;
    text-align: center;
}
.scroll {
    width: 24px;
    padding-top: 319px;
    border-left: 1px solid #5b5b5b;
    background: #646464;
}
.thumb {
    display: block;
    width: 13px;
    height: 95px;
    margin-left: 6px;
    border-radius: 7px;
    background: #404040;
}

/* modal */
.modal {
    position: absolute;
    top: 25px;
    right: 61px;
    bottom: 45px;
    width: 900px;
    display: flex;
    flex-direction: column;
    padding: 28px 36px 24px;
    border-radius: 16px;
    background: #fff;
    box-shadow: 0 20px 60px rgba(0, 0, 0, 0.6);
}
.modal h1 {
    display: flex;
    align-items: center;
    gap: 11px;
    margin: 0;
    font-size: 34px;
    font-weight: 400;
    line-height: 46px;
}
.modal h1 svg {
    width: 34px;
    height: 34px;
    fill: #1d1d1d;
}
.modal h3 {
    margin: 0;
    color: #03a9f4;
    font-size: 26px;
    font-weight: 400;
    line-height: 36px;
}
.steps {
    display: flex;
    margin: 63px 0 39px;
    padding: 0;
    list-style: none;
}
.steps li {
    position: relative;
    flex: 1;
    display: flex;
    flex-direction: column;
    align-items: center;
    gap: 24px;
    font-size: 18px;
    line-height: 26px;
}
.steps li + li::before {
    content: "";
    position: absolute;
    top: 18px;
    right: calc(50% + 30px);
    width: calc(100% - 60px);
    height: 2px;
    background: #bdbdbd;
}
.dot {
    width: 36px;
    height: 36px;
    border-radius: 50%;
    background: #26a69a;
}
.dot svg {
    width: 36px;
    height: 36px;
    fill: none;
    stroke: #fff;
    stroke-width: 3;
}
.now .dot {
    background: #50aaf3;
    color: #fff;
    font-size: 16px;
    line-height: 36px;
    text-align: center;
}
.spot {
    position: absolute;
    top: -35px;
    left: calc(50% - 75px);
    width: 150px;
    height: 150px;
    border-radius: 50%;
    background: rgba(255, 140, 10, 0.4);
}
.field {
    position: relative;
    display: flex;
}
.field input, .field textarea {
    flex: 1;
    min-width: 0;
    padding: 0 19px;
    border: 2px solid #c4c4c4;
    border-radius: 6px;
    background: #fff;
    font-size: 21px;
    outline: none;
    resize: none;
}
.field input::placeholder {
    color: #666;
    opacity: 1;
}
.emails {
    height: 80px;
    margin: 39px 0 35px;
}
.message {
    height: 170px;
    margin-bottom: 36px;
}
.message label {
    position: absolute;
    top: -14px;
    left: 14px;
    padding: 0 7px;
    background: #fff;
    color: #666;
    font-size: 16px;
    line-height: 24px;
}
.send-row {
    position: relative;
    display: flex;
    justify-content: flex-end;
    margin-bottom: 39px;
}
.send {
    width: 96px;
    height: 50px;
    border-radius: 12px;
    background: #e0e0e0;
    color: #a6a6a6;
    font-size: 19px;
}
.link {
    height: 81px;
    margin-top: 23px;
}
.field.link input {
    padding: 0 90px 0 18px;
    border: 3px solid #03a9f4;
    background: #e0e0e0;
}
.copy {
    position: absolute;
    top: 18px;
    right: 21px;
    width: 45px;
    height: 45px;
    border-radius: 12px;
    background: #03a9f4;
}
.copy svg {
    width: 45px;
    height: 45px;
    fill: none;
    stroke: #fff;
    stroke-width: 2;
}
.done {
    margin-top: auto;
    margin-left: auto;
    font-size: 19px;
    line-height: 28px;
}

/* annotations */
.ring {
    position: absolute;
    pointer-events: none;
    overflow: visible;
}
.ring-small {
    top: -25px;
    right: -37px;
    width: 197px;
    height: 103px;
}
.link .ring-small {
    top: -11px;
}
.ring-wide {
    top: -12px;
    left: -36px;
    width: 595px;
    height: 105px;
}
.callout {
    position: absolute;
    display: flex;
    align-items: center;
    justify-content: center;
    width: 326px;
    padding: 0 24px;
    border-radius: 8px;
    background: #ff9400;
    color: #fff;
    font-size: 43px;
    font-weight: 600;
    line-height: 53px;
    text-align: center;
}
.callout-add {
    top: -120px;
    right: calc(100% + 116px);
    height: 318px;
}
.callout-copy {
    top: -77px;
    right: calc(100% + 118px);
    height: 236px;
}
.callout::before, .callout::after {
    content: "";
    position: absolute;
    left: 100%;
}
.callout::before {
    top: calc(50% - 2px);
    width: 80px;
    height: 8px;
    background: #ff9400;
}
.callout::after {
    top: calc(50% - 13px);
    margin-left: 75px;
    border: 15px solid transparent;
    border-right: none;
    border-left: 30px solid #ff9400;
}
.callout-copy::before {
    top: calc(50% - 4px);
    width: 52px;
}
.callout-copy::after {
    top: calc(50% - 15px);
    margin-left: 50px;
}
```
